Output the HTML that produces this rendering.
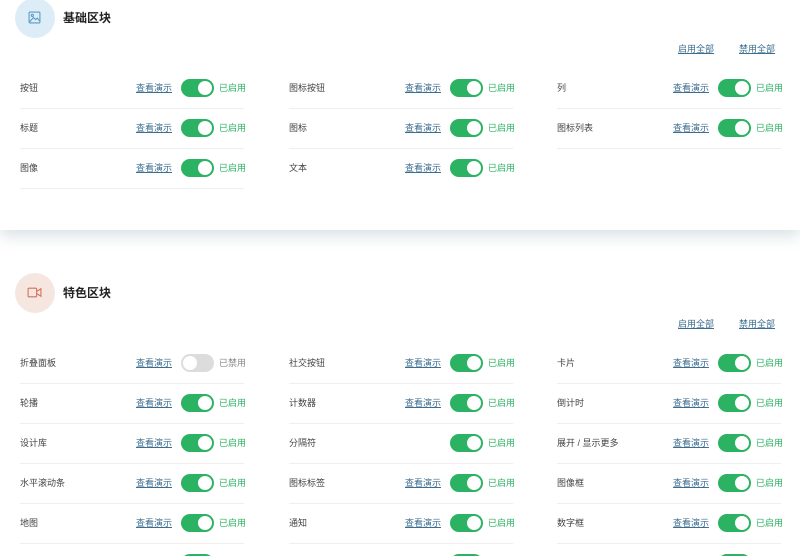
<!DOCTYPE html>
<html style="overflow:hidden"><head><meta charset="utf-8"><style>
html,body{overflow:hidden}
body{margin:0;width:800px;height:556px;overflow:hidden;background:#fff;font-family:"Liberation Sans","Noto Sans CJK SC",sans-serif;position:relative}
.card{position:absolute;left:0;top:0;width:800px;height:230px;background:#fff;box-shadow:0 6px 14px rgba(150,170,180,.35)}
.circ{position:absolute;width:40px;height:40px;border-radius:50%}
.title{position:absolute;font-size:12px;font-weight:bold;color:#222;line-height:16px;white-space:nowrap}
.all{position:absolute;font-size:9px;color:#3d6d8f;text-decoration:underline;line-height:12px;white-space:nowrap}
.r{position:absolute;width:224px;height:40px;border-bottom:1px solid #efefef;font-size:9px;line-height:40px;white-space:nowrap}
.r span{white-space:nowrap}
.r .l{position:absolute;left:0;color:#444}
.r .d{position:absolute;left:116px;color:#3d6d8f;text-decoration:underline}
.r .t{position:absolute;left:161px;top:11px;width:33px;height:18px;border-radius:9px;background:#2bb262}
.r .t:after{content:"";position:absolute;right:2px;top:2px;width:14px;height:14px;border-radius:50%;background:#fff}
.r .t.off{background:#dcdcdc}
.r .t.off:after{right:auto;left:2px}
.r .s{position:absolute;left:199px;color:#2bb262}
.r .s.off{color:#888}
.r.last{height:13px;border:0;overflow:hidden}
</style></head><body>
<div class="card">
<div class="circ" style="left:15px;top:-2px;background:#dcedf7"></div>
<svg style="position:absolute;left:28px;top:11px" width="13" height="13" viewBox="0 0 12 12" fill="none" stroke="#5b9ac4" stroke-width="1"><rect x="1" y="1" width="10" height="10" rx="1"/><circle cx="4" cy="4" r="1"/><path d="M1.5 10 L5 6 L7 8 L8.5 6.5 L10.5 9"/></svg>
<div class="title" style="left:63px;top:10px">基础区块</div>
<div class="all" style="left:678px;top:43px">启用全部</div>
<div class="all" style="left:739px;top:43px">禁用全部</div>
<div class="r" style="left:20px;top:68px"><span class="l">按钮</span><span class="d">查看演示</span><span class="t"></span><span class="s">已启用</span></div>
<div class="r" style="left:20px;top:108px"><span class="l">标题</span><span class="d">查看演示</span><span class="t"></span><span class="s">已启用</span></div>
<div class="r" style="left:20px;top:148px"><span class="l">图像</span><span class="d">查看演示</span><span class="t"></span><span class="s">已启用</span></div>
<div class="r" style="left:289px;top:68px"><span class="l">图标按钮</span><span class="d">查看演示</span><span class="t"></span><span class="s">已启用</span></div>
<div class="r" style="left:289px;top:108px"><span class="l">图标</span><span class="d">查看演示</span><span class="t"></span><span class="s">已启用</span></div>
<div class="r" style="left:289px;top:148px;border:0"><span class="l">文本</span><span class="d">查看演示</span><span class="t"></span><span class="s">已启用</span></div>
<div class="r" style="left:557px;top:68px"><span class="l">列</span><span class="d">查看演示</span><span class="t"></span><span class="s">已启用</span></div>
<div class="r" style="left:557px;top:108px"><span class="l">图标列表</span><span class="d">查看演示</span><span class="t"></span><span class="s">已启用</span></div>
</div>

<div class="circ" style="left:15px;top:273px;background:#f6e6e0"></div>
<svg style="position:absolute;left:27px;top:287px" width="15" height="11" viewBox="0 0 14 10" fill="none" stroke="#d2705a" stroke-width="1"><rect x="1" y="1" width="8" height="8" rx="1"/><path d="M9 4 L13 1.5 V8.5 L9 6"/></svg>
<div class="title" style="left:63px;top:285px">特色区块</div>
<div class="all" style="left:678px;top:318px">启用全部</div>
<div class="all" style="left:739px;top:318px">禁用全部</div>

<div class="r" style="left:20px;top:343px"><span class="l">折叠面板</span><span class="d">查看演示</span><span class="t off"></span><span class="s off">已禁用</span></div>
<div class="r" style="left:20px;top:383px"><span class="l">轮播</span><span class="d">查看演示</span><span class="t"></span><span class="s">已启用</span></div>
<div class="r" style="left:20px;top:423px"><span class="l">设计库</span><span class="d">查看演示</span><span class="t"></span><span class="s">已启用</span></div>
<div class="r" style="left:20px;top:463px"><span class="l">水平滚动条</span><span class="d">查看演示</span><span class="t"></span><span class="s">已启用</span></div>
<div class="r" style="left:20px;top:503px"><span class="l">地图</span><span class="d">查看演示</span><span class="t"></span><span class="s">已启用</span></div>
<div class="r last" style="left:20px;top:543px"><span class="t"></span></div>

<div class="r" style="left:289px;top:343px"><span class="l">社交按钮</span><span class="d">查看演示</span><span class="t"></span><span class="s">已启用</span></div>
<div class="r" style="left:289px;top:383px"><span class="l">计数器</span><span class="d">查看演示</span><span class="t"></span><span class="s">已启用</span></div>
<div class="r" style="left:289px;top:423px"><span class="l">分隔符</span><span class="t"></span><span class="s">已启用</span></div>
<div class="r" style="left:289px;top:463px"><span class="l">图标标签</span><span class="d">查看演示</span><span class="t"></span><span class="s">已启用</span></div>
<div class="r" style="left:289px;top:503px"><span class="l">通知</span><span class="d">查看演示</span><span class="t"></span><span class="s">已启用</span></div>
<div class="r last" style="left:289px;top:543px"><span class="t"></span></div>

<div class="r" style="left:557px;top:343px"><span class="l">卡片</span><span class="d">查看演示</span><span class="t"></span><span class="s">已启用</span></div>
<div class="r" style="left:557px;top:383px"><span class="l">倒计时</span><span class="d">查看演示</span><span class="t"></span><span class="s">已启用</span></div>
<div class="r" style="left:557px;top:423px"><span class="l">展开 / 显示更多</span><span class="d">查看演示</span><span class="t"></span><span class="s">已启用</span></div>
<div class="r" style="left:557px;top:463px"><span class="l">图像框</span><span class="d">查看演示</span><span class="t"></span><span class="s">已启用</span></div>
<div class="r" style="left:557px;top:503px"><span class="l">数字框</span><span class="d">查看演示</span><span class="t"></span><span class="s">已启用</span></div>
<div class="r last" style="left:557px;top:543px"><span class="t"></span></div>
</body></html>
